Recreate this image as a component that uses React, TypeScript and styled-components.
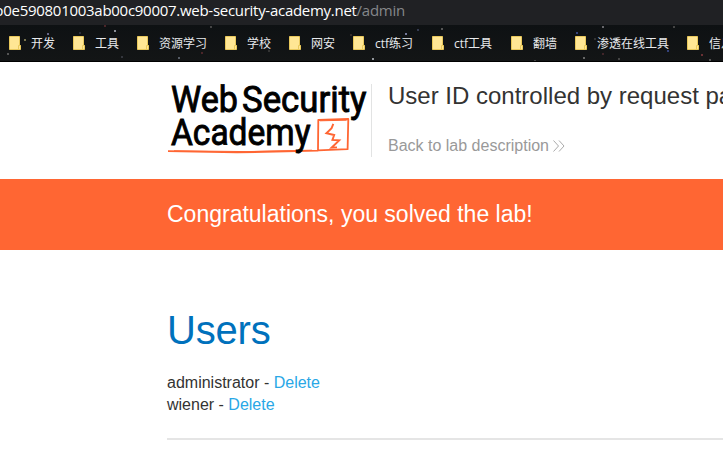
import React from 'react';
import styled, { createGlobalStyle } from 'styled-components';

const GlobalStyle = createGlobalStyle`
  body {
    margin: 0;
    background: #fff;
    color: #333332;
    font-family: "Liberation Sans", Arial, sans-serif;
    overflow: hidden;
  }
`;

const Page = styled.div`
  width: 723px;
  height: 452px;
  overflow: hidden;
`;

const AddressBar = styled.div`
  display: flex;
  justify-content: flex-end;
  box-sizing: border-box;
  width: 723px;
  height: 25px;
  padding-right: 318px;
  background: #202124;
  color: #fff;
  font: 15px/21px "Open Sans", sans-serif;
  letter-spacing: -0.28px;
  white-space: nowrap;
`;

const UrlPath = styled.span`
  color: #85878a;
  letter-spacing: -0.25px;
`;

const BookmarkBar = styled.nav`
  position: relative;
  display: flex;
  align-items: center;
  box-sizing: border-box;
  height: 37px;
  padding-left: 9px;
  background: linear-gradient(#0e1113, #131516);
  border-bottom: 1px solid #000;
  overflow: hidden;
`;

const Stars = styled.svg`
  position: absolute;
  inset: 0;
`;

const Bookmark = styled.div<{ $width: number }>`
  position: relative;
  display: flex;
  flex: 0 0 ${(p) => p.$width}px;
  align-items: center;
  gap: 10px;
  color: #e8eaed;
  font: 12px/18px "Open Sans", "Noto Sans CJK SC", sans-serif;
  white-space: nowrap;
`;

const BookmarkLabel = styled.span`
  padding-top: 2px;
`;

const Header = styled.header`
  display: flex;
  box-sizing: border-box;
  height: 117px;
  padding: 22px 0 0 167px;
`;

const Logo = styled.svg`
  flex: none;
  width: 204px;
  height: 74px;
`;

const Heading = styled.div`
  flex: none;
  height: 73px;
  border-left: 1px solid #e2e3e3;
  padding-left: 16px;
  white-space: nowrap;
`;

const Title = styled.h2`
  margin: 0;
  font-size: 24px;
  font-weight: 400;
  line-height: 24px;
`;

const BackLink = styled.a`
  display: flex;
  align-items: center;
  gap: 4px;
  margin-top: 28px;
  color: #999;
  font-size: 16px;
  line-height: 20px;
`;

const Banner = styled.section`
  box-sizing: border-box;
  height: 71px;
  padding: 23px 0 0 167px;
  background: #ff6633;
  color: #fff;
  font-size: 23px;
  line-height: 25px;
`;

const Content = styled.main`
  padding: 57px 0 0 167px;
`;

const UsersTitle = styled.h1`
  margin: 0 0 19px;
  color: #0071bc;
  font-size: 40px;
  font-weight: 400;
  line-height: 46px;
  letter-spacing: -0.2px;
`;

const UserRow = styled.div`
  height: 22px;
  font-size: 16px;
  line-height: 22px;
`;

const DeleteLink = styled.a`
  color: #29a7e6;
`;

const Divider = styled.hr`
  height: 2px;
  margin: 22px 0 0;
  border: 0;
  background: #e5e5e5;
`;

const bookmarks = [
  { label: '开发', width: 64 },
  { label: '工具', width: 64 },
  { label: '资源学习', width: 88 },
  { label: '学校', width: 64 },
  { label: '网安', width: 64 },
  { label: 'ctf练习', width: 79 },
  { label: 'ctf工具', width: 79 },
  { label: '翻墙', width: 64 },
  { label: '渗透在线工具', width: 112 },
  { label: '信息收集', width: 88 },
];

const stars: [number, number, string][] = [
  [24, 14, '#77734f'], [47, 8, '#66668a'], [7, 28, '#555'], [114, 5, '#8b8e97'],
  [104, 0, '#4b2529'], [79, 7, '#292d38'], [178, 32, '#555b65'], [201, 27, '#4b2529'],
  [210, 1, '#444'], [121, 31, '#34363d'], [405, 8, '#73799a'], [441, 3, '#555'],
  [372, 33, '#92969b'], [417, 4, '#353b50'], [350, 9, '#342b28'], [268, 25, '#333'],
  [576, 7, '#34427b'], [602, 1, '#66666a'], [673, 1, '#444'], [583, 32, '#666'],
  [618, 33, '#444'], [701, 29, '#693034'], [709, 34, '#555'], [594, 13, '#333'],
  [602, 28, '#412529'], [667, 25, '#34427b'], [534, 35, '#444'],
];

const FolderIcon = () => (
  <svg width="12" height="14" viewBox="0 0 12 14">
    <path d="M.5.5h10v9h1v4H.5z" fill="#ffe694" stroke="#e9c85b" />
    <path d="M9.5 13V9.5h2" fill="none" stroke="#e9c85b" />
  </svg>
);

const AcademyLogo = () => (
  <Logo viewBox="0 0 204 74">
    <g fill="none" stroke="#ff6633">
      <path d="M1 67.2L70 68.4 151 66.6 151.3 36 181.3 35 180.6 65.2 151 66.4" strokeWidth="1.8" strokeLinejoin="round" />
      <path d="M7 66.8L80 67.6 145 66.2M153 36.8L179.5 36.2" strokeWidth="1" />
      <path d="M166.3 39.8L164.6 44.2 159.4 49.2 167.2 51 165.4 56 172.2 56.4 164.5 63.7 170 63.4" strokeWidth="1.9" />
    </g>
    <g fill="#000" stroke="#000" strokeWidth="0.9" fontFamily="Roboto, sans-serif" fontSize="36.5" fontWeight="400">
      <text x="4" y="27.6" textLength="67" lengthAdjust="spacingAndGlyphs">Web</text>
      <text x="75" y="27.6" textLength="124.5" lengthAdjust="spacingAndGlyphs">Security</text>
      <text x="4" y="60.6" textLength="139.5" lengthAdjust="spacingAndGlyphs">Academy</text>
    </g>
  </Logo>
);

export default function App() {
  return (
    <Page>
      <GlobalStyle />
      <AddressBar>
        b0e590801003ab00c90007.web-security-academy.net<UrlPath>/admin</UrlPath>
      </AddressBar>
      <BookmarkBar>
        <Stars width="723" height="36">
          {stars.map(([x, y, fill], i) => (
            <rect key={i} x={x} y={y} width="2" height="2" fill={fill} />
          ))}
        </Stars>
        {bookmarks.map((b) => (
          <Bookmark key={b.label} $width={b.width}>
            <FolderIcon />
            <BookmarkLabel>{b.label}</BookmarkLabel>
          </Bookmark>
        ))}
      </BookmarkBar>
      <Header>
        <AcademyLogo />
        <Heading>
          <Title>User ID controlled by request parameter</Title>
          <BackLink>
            Back to lab description
            <svg width="12" height="12" viewBox="0 0 12 12" fill="none" stroke="#aaa">
              <path d="M.5.5L5.5 6 .5 11.5M6 .5L11 6 6 11.5" />
            </svg>
          </BackLink>
        </Heading>
      </Header>
      <Banner>Congratulations, you solved the lab!</Banner>
      <Content>
        <UsersTitle>Users</UsersTitle>
        <UserRow>administrator - <DeleteLink>Delete</DeleteLink></UserRow>
        <UserRow>wiener - <DeleteLink>Delete</DeleteLink></UserRow>
        <Divider />
      </Content>
    </Page>
  );
}
